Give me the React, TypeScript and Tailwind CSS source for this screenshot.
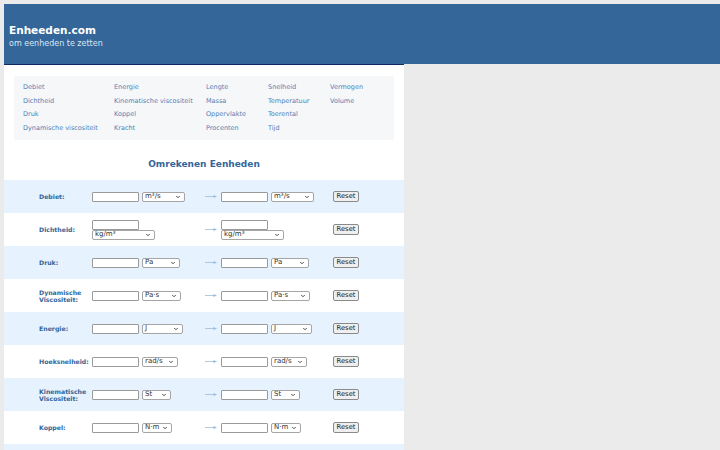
import { ChevronDown } from "lucide-react";

// ─── Data ───

const LINK_COLUMNS: string[][] = [
  ["Debiet", "Dichtheid", "Druk", "Dynamische viscositeit"],
  ["Energie", "Kinematische viscositeit", "Koppel", "Kracht"],
  ["Lengte", "Massa", "Oppervlakte", "Procenten"],
  ["Snelheid", "Temperatuur", "Toerental", "Tijd"],
  ["Vermogen", "Volume"],
];

interface Row {
  label: string[];
  unit: string;
  selectW: string;
  stacked?: boolean;
}

const ROWS: Row[] = [
  { label: ["Debiet:"], unit: "m³/s", selectW: "w-[43px]" },
  { label: ["Dichtheid:"], unit: "kg/m³", selectW: "w-[63px]", stacked: true },
  { label: ["Druk:"], unit: "Pa", selectW: "w-[38px]" },
  { label: ["Dynamische", "Viscositeit:"], unit: "Pa·s", selectW: "w-[39px]" },
  { label: ["Energie:"], unit: "J", selectW: "w-[41px]" },
  { label: ["Hoeksnelheid:"], unit: "rad/s", selectW: "w-[36px]" },
  { label: ["Kinematische", "Viscositeit:"], unit: "St", selectW: "w-[29px]" },
  { label: ["Koppel:"], unit: "N·m", selectW: "w-[30px]" },
  { label: ["Kracht:"], unit: "N", selectW: "w-[30px]" },
];

// ─── Small controls ───

function TextBox() {
  return (
    <input
      type="text"
      className="w-[47px] h-[10px] bg-white border border-[#9a9a9a] rounded-[1px] outline-none"
    />
  );
}

function UnitSelect({ unit, width }: { unit: string; width: string }) {
  return (
    <span className={`relative inline-flex items-center h-[10px] ${width} bg-white border border-[#a5a5a5] rounded-[2px]`}>
      <span className="pl-[2px] text-[7px] leading-none text-[#333]">{unit}</span>
      <ChevronDown className="absolute right-[3px] w-[6px] h-[6px] text-[#333]" strokeWidth={3.5} />
    </span>
  );
}

function Pair({ unit, width, stacked }: { unit: string; width: string; stacked?: boolean }) {
  if (stacked) {
    return (
      <div className="flex flex-col items-start">
        <TextBox />
        <UnitSelect unit={unit} width={width} />
      </div>
    );
  }
  return (
    <div className="flex items-center gap-[3px]">
      <TextBox />
      <UnitSelect unit={unit} width={width} />
    </div>
  );
}

function Arrow() {
  return (
    <svg width="13" height="5" viewBox="0 0 13 5" className="text-[#9bbcdd]">
      <line x1="0" y1="2.5" x2="9" y2="2.5" stroke="currentColor" strokeWidth="0.8" />
      <path d="M8.5 1 L12 2.5 L8.5 4 Z" fill="currentColor" />
    </svg>
  );
}

// ─── Page ───

export default function App() {
  return (
    <div className="min-h-screen bg-[#ebebeb] pt-[4px] pl-[4px] font-['DejaVu_Sans',sans-serif]">
      {/* Header */}
      <header className="h-[60px] bg-[#346699] pl-[5px] pt-[19px]">
        <h1 className="text-[10.5px] font-bold text-white leading-[14px]">Enheeden.com</h1>
        <p className="text-[8px] text-[#dce6f0] leading-[13px]">om eenheden te zetten</p>
      </header>

      <main className="w-[400px] bg-white border-t border-[#0f2a63] pb-[10px]">
        {/* Links */}
        <nav className="mx-[10px] mt-[11px] h-[64px] bg-[#f6f7f9] pl-[9px] pt-[5px] grid grid-cols-[91px_92px_62px_62px_1fr]">
          {LINK_COLUMNS.map((col, i) => (
            <div key={i} className="flex flex-col">
              {col.map((name) => (
                <a key={name} className="text-[6.5px] leading-[13.5px] text-[#4f7fb5] whitespace-nowrap">
                  {name}
                </a>
              ))}
            </div>
          ))}
        </nav>

        <h2 className="h-[40px] pt-[9px] flex items-center justify-center text-[9px] font-bold text-[#336699]">
          Omrekenen Eenheden
        </h2>

        {/* Converter rows */}
        <div className="flex flex-col">
          {ROWS.map((row, i) => (
            <div
              key={row.label.join(" ")}
              className={`h-[33px] pl-[35px] grid grid-cols-[53px_113px_16px_112px_auto] items-center ${
                i % 2 === 0 ? "bg-[#e6f2fd]" : "bg-white"
              }`}
            >
              <div className="text-[6.2px] font-bold leading-[7px] text-[#336699] whitespace-nowrap">
                {row.label.map((l) => (
                  <div key={l}>{l}</div>
                ))}
              </div>
              <Pair unit={row.unit} width={row.selectW} stacked={row.stacked} />
              <div className="flex items-center">
                <Arrow />
              </div>
              <Pair unit={row.unit} width={row.selectW} stacked={row.stacked} />
              <div className="flex items-center">
                <button className="h-[11px] w-[26px] flex items-center justify-center bg-[#efefef] border border-[#8a8a8a] rounded-[2px] text-[6.8px] leading-none text-[#222]">
                  Reset
                </button>
              </div>
            </div>
          ))}
        </div>
      </main>
    </div>
  );
}
